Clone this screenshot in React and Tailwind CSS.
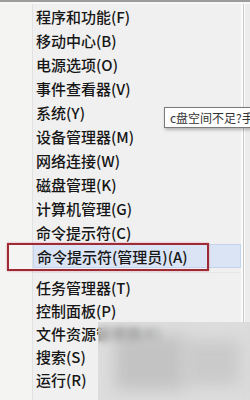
import React from "react";

const groupA = [
  "程序和功能(F)",
  "移动中心(B)",
  "电源选项(O)",
  "事件查看器(V)",
  "系统(Y)",
  "设备管理器(M)",
  "网络连接(W)",
  "磁盘管理(K)",
  "计算机管理(G)",
  "命令提示符(C)",
];

const groupB = ["任务管理器(T)", "控制面板(P)", "文件资源管理器(E)", "搜索(S)", "运行(R)"];

export default function App() {
  return (
    <div className="relative w-[250px] h-[400px] overflow-hidden bg-[#f0f0f0] text-[#161616] font-['Noto_Sans_CJK_SC',sans-serif] font-medium text-[15px] leading-none">
      {/* top frame */}
      <div className="h-[2px] bg-[#9c9c9c]" />
      <div className="h-[2px] bg-[#f7f7f7]" />

      <div className="flex h-[396px]">
        {/* icon gutter */}
        <div className="w-[33px] bg-[#f4f4f2] border-r border-[#e2e2e2]" />

        {/* menu items */}
        <div className="flex-1 flex flex-col">
          {groupA.map((t) => (
            <div key={t} className="h-[24px] flex items-center pl-[3px]">
              {t}
            </div>
          ))}
          <div className="h-[24px] flex items-center pl-[3px] bg-[#dae4f4] border border-[#c4d4ee]">
            命令提示符(管理员)(A)
          </div>
          <div className="h-[8px] flex items-center">
            <div className="w-full h-px bg-[#e6e6e6]" />
          </div>
          {groupB.map((t) => (
            <div key={t} className="h-[23px] flex items-center pl-[3px]">
              {t}
            </div>
          ))}
        </div>

        {/* right frame */}
        <div className="w-[9px] flex">
          <div className="w-[2px] bg-[#fbfbfb]" />
          <div className="w-px bg-[#c8c8c8]" />
          <div className="w-px bg-[#fdfdfd]" />
          <div className="flex-1 bg-[#ececec]" />
        </div>
      </div>

      {/* red annotation box */}
      <div className="absolute left-[7px] top-[243px] w-[202px] h-[28px] border-2 border-[#9e2a36] shadow-[0_0_2px_#d99aa2]" />

      {/* tooltip */}
      <div className="absolute left-[164px] top-[107px] w-[100px] h-[21px] bg-white border border-[#7a7a7a] shadow-[1px_2px_3px_rgba(0,0,0,0.25)] flex items-center pl-[5px] text-[12px] font-normal text-[#333] whitespace-nowrap">
        c盘空间不足?手
      </div>

      {/* blurred watermark */}
      <div className="absolute left-[98px] top-[322px] w-[160px] h-[90px] backdrop-blur-[3px] bg-[#d0d0d0]/60" />
      <div className="absolute left-[115px] top-[335px] w-[70px] h-[55px] bg-[#b8b8b8] blur-[8px] opacity-70" />
      <div className="absolute left-[185px] top-[340px] w-[55px] h-[45px] bg-[#c2c2c2] blur-[8px] opacity-70" />
    </div>
  );
}
